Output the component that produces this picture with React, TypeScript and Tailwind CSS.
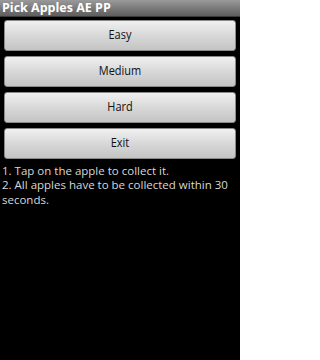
import React from "react";

const btns = ["Easy", "Medium", "Hard", "Exit"];

export default function App() {
  return (
    <div className="w-[240px] h-[360px] bg-black flex flex-col" style={{ fontFamily: '"Open Sans", "DejaVu Sans", sans-serif' }}>
      <div className="h-[17px] bg-gradient-to-b from-[#9a9a9a] to-[#5e5e5e] flex items-center pl-[2px] border-b border-[#3a3a3a]">
        <span className="text-white font-bold text-[12.5px] leading-none">Pick Apples AE PP</span>
      </div>
      <div className="flex flex-col gap-[5px] px-[4px] pt-[3px]">
        {btns.map((b) => (
          <div
            key={b}
            className="h-[31px] rounded-[3px] border border-[#8a8a8a] bg-gradient-to-b from-[#f0f0f0] via-[#d8d8d8] to-[#c4c4c4] flex items-center justify-center text-[11px] text-[#111]"
          >
            <span className="inline-block scale-y-[1.125]">{b}</span>
          </div>
        ))}
      </div>
      <div className="px-[2px] pt-[5px] text-[11.5px] leading-[14.3px] text-[#d8d8d8]">
        <div>1. Tap on the apple to collect it.</div>
        <div>2. All apples have to be collected within 30 seconds.</div>
      </div>
    </div>
  );
}
